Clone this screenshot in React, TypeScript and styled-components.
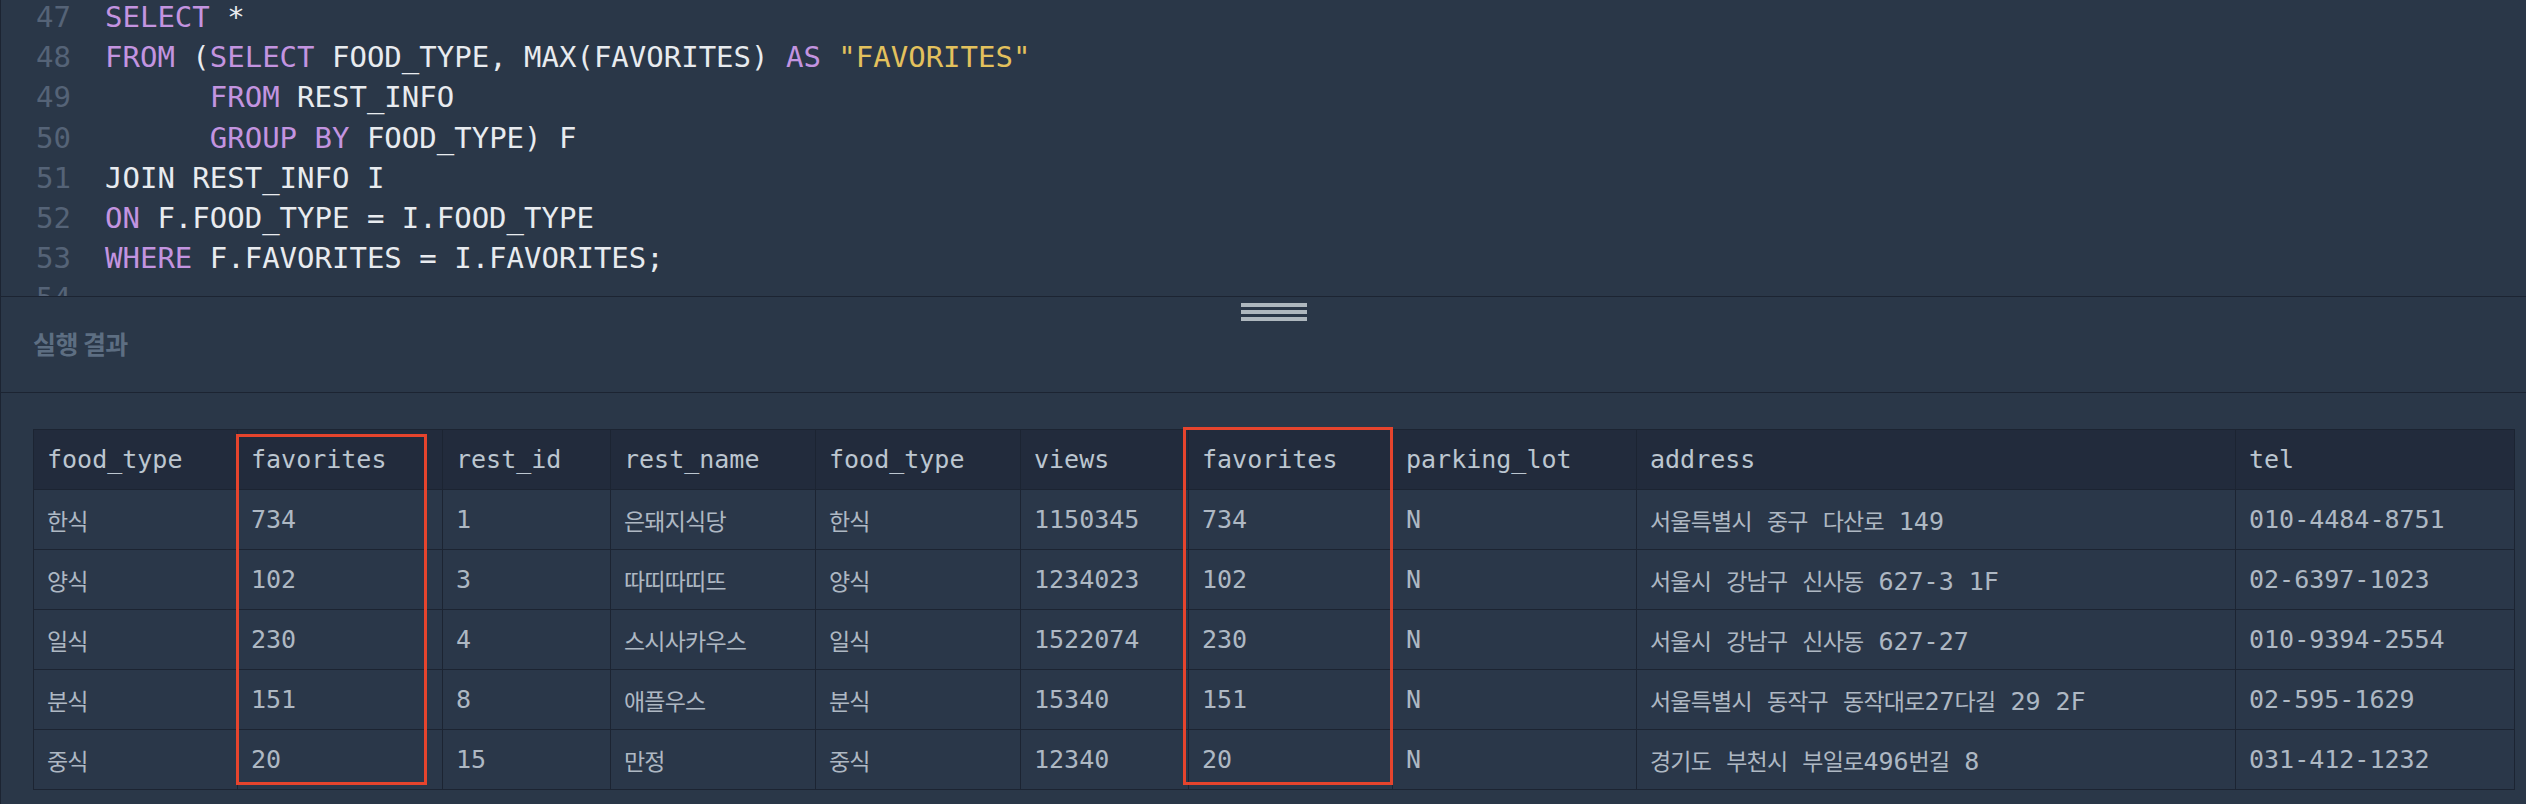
import React from "react";
import styled, { createGlobalStyle } from "styled-components";

const BG = "#2a3748";
const LINE = "#1c2432";
const MONO = `"DejaVu Sans Mono", "Noto Sans CJK KR", monospace`;

const Global = createGlobalStyle`
  html, body { margin: 0; padding: 0; background: ${BG}; }
  #root { width: 2526px; height: 804px; overflow: hidden; }
`;

const Page = styled.div`
  width: 2526px;
  height: 804px;
  box-sizing: border-box;
  border-left: 1px solid ${LINE};
  background: ${BG};
  display: flex;
  flex-direction: column;
  overflow: hidden;
`;

/* ---------- editor ---------- */
const Editor = styled.div`
  height: 296px;
  flex: none;
  overflow: hidden;
  border-bottom: 1px solid ${LINE};
`;

const EditorScroll = styled.div`
  margin-top: -3px;
  display: flex;
  font-family: ${MONO};
  font-size: 29px;
  line-height: 40.2px;
`;

const Gutter = styled.div`
  padding-left: 35px;
  width: 35px;
  text-align: right;
  color: #556377;
  flex: none;
`;

const Code = styled.div`
  margin-left: 34px;
  white-space: pre;
  color: #e6e9ee;
`;

const CodeLine = styled.div`
  height: 40.2px;
`;

const Tok = styled.span<{ $kind: "kw" | "str" | "txt" }>`
  color: ${(p) =>
    p.$kind === "kw" ? "#c394e0" : p.$kind === "str" ? "#e3c15d" : "#e8ebef"};
`;

type T = ["kw" | "str" | "txt", string];
const LINES: { n: number; toks: T[] }[] = [
  { n: 47, toks: [["kw", "SELECT"], ["txt", " *"]] },
  {
    n: 48,
    toks: [
      ["kw", "FROM"],
      ["txt", " ("],
      ["kw", "SELECT"],
      ["txt", " FOOD_TYPE, MAX(FAVORITES) "],
      ["kw", "AS"],
      ["txt", " "],
      ["str", '"FAVORITES"'],
    ],
  },
  { n: 49, toks: [["txt", "      "], ["kw", "FROM"], ["txt", " REST_INFO"]] },
  { n: 50, toks: [["txt", "      "], ["kw", "GROUP BY"], ["txt", " FOOD_TYPE) F"]] },
  { n: 51, toks: [["txt", "JOIN REST_INFO I"]] },
  { n: 52, toks: [["kw", "ON"], ["txt", " F.FOOD_TYPE = I.FOOD_TYPE"]] },
  { n: 53, toks: [["kw", "WHERE"], ["txt", " F.FAVORITES = I.FAVORITES;"]] },
  { n: 54, toks: [["txt", ""]] },
];

/* ---------- result header ---------- */
const ResultHeader = styled.div`
  position: relative;
  height: 96px;
  flex: none;
  box-sizing: border-box;
  border-bottom: 1px solid ${LINE};
  display: flex;
  align-items: center;
  padding: 0 0 4px 32px;
`;

const ResultTitle = styled.div`
  font-family: "Noto Sans CJK KR", sans-serif;
  font-weight: 700;
  font-size: 25px;
  letter-spacing: -0.6px;
  color: #5d6e82;
`;

const Grip = styled.div`
  position: absolute;
  left: 1240px;
  top: 6px;
  width: 66px;
  display: flex;
  flex-direction: column;
  gap: 3.5px;
`;

const GripBar = styled.div`
  height: 3.5px;
  background: #aeb7be;
`;

/* ---------- table ---------- */
const ResultBody = styled.div`
  flex: 1;
  padding: 36px 12px 0 32px;
`;

const TableWrap = styled.div`
  position: relative;
  width: 2482px;
`;

const COLS = [204, 205, 168, 205, 205, 168, 204, 244, 599, 279];

const Grid = styled.div`
  display: grid;
  grid-template-columns: ${COLS.map((c) => c + "px").join(" ")};
  border-top: 1px solid ${LINE};
  border-left: 1px solid ${LINE};
  font-family: ${MONO};
  font-size: 25px;
`;

const Cell = styled.div<{ $head?: boolean }>`
  box-sizing: border-box;
  height: 60px;
  display: flex;
  align-items: center;
  padding-left: 13px;
  border-right: 1px solid ${LINE};
  border-bottom: 1px solid ${LINE};
  background: ${(p) => (p.$head ? "#222b3c" : "#2a3749")};
  color: ${(p) => (p.$head ? "#bcc6d0" : "#aeb8c3")};
`;

const CellText = styled.span`
  white-space: pre;
`;

const Hangul = styled.span`
  font-family: "Noto Sans CJK KR", sans-serif;
  font-size: 23px;
  letter-spacing: -0.8px;
`;

const Highlight = styled.div<{ $l: number; $t: number; $w: number; $h: number }>`
  position: absolute;
  left: ${(p) => p.$l}px;
  top: ${(p) => p.$t}px;
  width: ${(p) => p.$w}px;
  height: ${(p) => p.$h}px;
  box-sizing: border-box;
  border: 3px solid #e6442d;
  pointer-events: none;
`;

const HEAD = [
  "food_type",
  "favorites",
  "rest_id",
  "rest_name",
  "food_type",
  "views",
  "favorites",
  "parking_lot",
  "address",
  "tel",
];

const ROWS = [
  ["한식", "734", "1", "은돼지식당", "한식", "1150345", "734", "N", "서울특별시 중구 다산로 149", "010-4484-8751"],
  ["양식", "102", "3", "따띠따띠뜨", "양식", "1234023", "102", "N", "서울시 강남구 신사동 627-3 1F", "02-6397-1023"],
  ["일식", "230", "4", "스시사카우스", "일식", "1522074", "230", "N", "서울시 강남구 신사동 627-27", "010-9394-2554"],
  ["분식", "151", "8", "애플우스", "분식", "15340", "151", "N", "서울특별시 동작구 동작대로27다길 29 2F", "02-595-1629"],
  ["중식", "20", "15", "만정", "중식", "12340", "20", "N", "경기도 부천시 부일로496번길 8", "031-412-1232"],
];

function Mixed({ text }: { text: string }) {
  const parts = text.split(/([\uAC00-\uD7A3]+)/);
  return (
    <CellText>
      {parts.map((p, i) =>
        /[\uAC00-\uD7A3]/.test(p) ? <Hangul key={i}>{p}</Hangul> : <React.Fragment key={i}>{p}</React.Fragment>
      )}
    </CellText>
  );
}

export default function App() {
  return (
    <>
      <Global />
      <Page>
        <Editor>
          <EditorScroll>
            <Gutter>
              {LINES.map((l) => (
                <CodeLine key={l.n}>{l.n}</CodeLine>
              ))}
            </Gutter>
            <Code>
              {LINES.map((l) => (
                <CodeLine key={l.n}>
                  {l.toks.map(([k, t], i) => (
                    <Tok key={i} $kind={k}>
                      {t}
                    </Tok>
                  ))}
                </CodeLine>
              ))}
            </Code>
          </EditorScroll>
        </Editor>
        <ResultHeader>
          <ResultTitle>실행 결과</ResultTitle>
          <Grip>
            <GripBar />
            <GripBar />
            <GripBar />
          </Grip>
        </ResultHeader>
        <ResultBody>
          <TableWrap>
            <Grid>
              {HEAD.map((h, i) => (
                <Cell $head key={"h" + i}>
                  <CellText>{h}</CellText>
                </Cell>
              ))}
              {ROWS.map((r, ri) =>
                r.map((c, ci) => (
                  <Cell key={ri + "-" + ci}>
                    <Mixed text={c} />
                  </Cell>
                ))
              )}
            </Grid>
            <Highlight $l={203} $t={5} $w={191} $h={351} />
            <Highlight $l={1150} $t={-2} $w={210} $h={358} />
          </TableWrap>
        </ResultBody>
      </Page>
    </>
  );
}
